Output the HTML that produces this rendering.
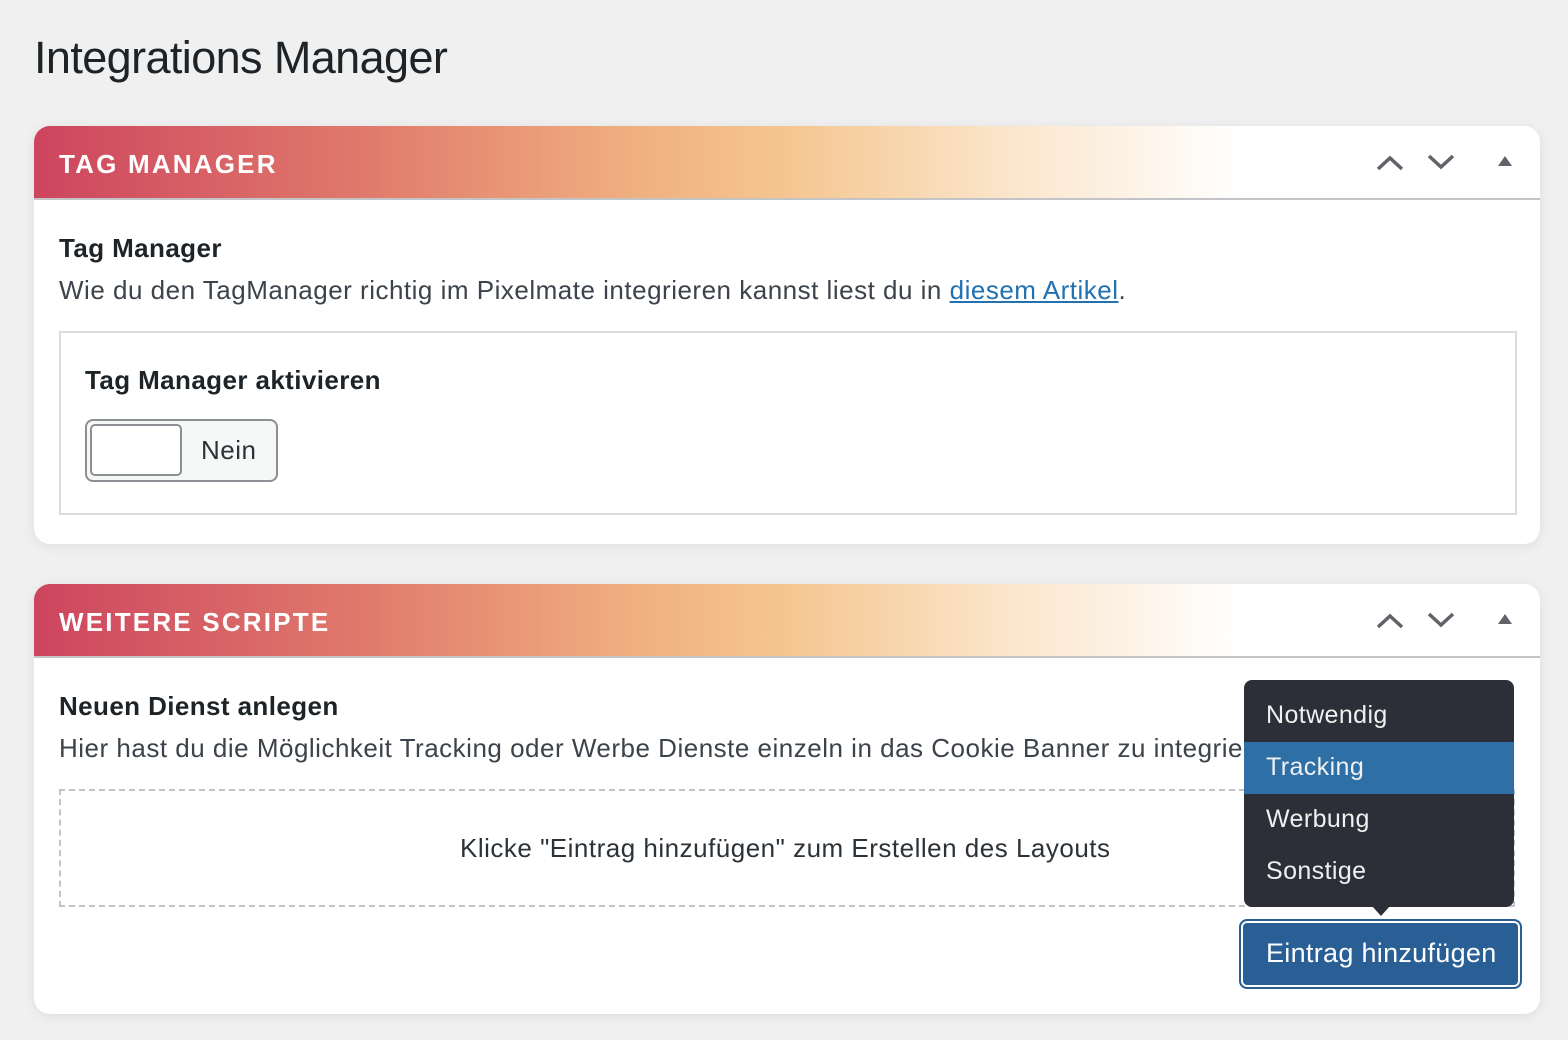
<!DOCTYPE html>
<html><head><meta charset="utf-8"><style>
body{margin:0;width:1568px;height:1040px;background:#f0f0f1;font-family:"Liberation Sans",sans-serif;color:#3c434a;position:relative;overflow:hidden}
.abs{position:absolute}
h1{position:absolute;left:34px;top:32px;margin:0;font-size:45px;font-weight:400;color:#1d2327;letter-spacing:-0.6px}
.card{position:absolute;left:34px;width:1506px;background:#fff;border-radius:16px;box-shadow:0 2px 12px rgba(0,0,0,.08);overflow:hidden}
.hd{height:72px;border-bottom:2px solid #c3c4c7;background:linear-gradient(90deg,#cd455e 0%,#e07a6c 22%,#f0b080 40%,#f5c690 50%,#fbe6cc 65%,#fff 80%)}
.hd span{position:absolute;left:25px;top:23px;color:#fff;font-weight:700;font-size:26px;letter-spacing:2.2px}
.ic{position:absolute;top:24px}
.t{font-size:26px;letter-spacing:0.5px;position:absolute;left:25px;white-space:nowrap}
.b{font-weight:700;color:#1d2327;letter-spacing:0.4px}
</style></head><body>
<h1>Integrations Manager</h1>

<div class="card" style="top:126px;height:418px">
 <div class="hd"><span>TAG MANAGER</span></div>
 <svg class="ic" style="left:1340px" width="190" height="30" viewBox="0 0 190 30"><path d="M4 19 L16 8 L28 19" stroke="#606468" stroke-width="3.5" fill="none"/><path d="M55 6 L67 17 L79 6" stroke="#606468" stroke-width="3.5" fill="none"/><path d="M124 16 L131 6 L138 16Z" fill="#606468"/></svg>
 <div class="t b" style="top:107px">Tag Manager</div>
 <div class="t" style="top:149px">Wie du den TagManager richtig im Pixelmate integrieren kannst liest du in <span style="color:#2271b1;text-decoration:underline">diesem Artikel</span>.</div>
 <div class="abs" style="left:25px;top:205px;width:1454px;height:180px;border:2px solid #dcdcde"></div>
 <div class="t b" style="left:51px;top:239px">Tag Manager aktivieren</div>
 <div class="abs" style="left:51px;top:293px;width:189px;height:59px;border:2px solid #8c8f94;border-radius:8px;background:#f6f7f7"></div>
 <div class="abs" style="left:56px;top:298px;width:88px;height:48px;border:2px solid #8c8f94;border-radius:5px;background:#fff"></div>
 <div class="t" style="left:167px;top:309px;color:#2c3338">Nein</div>
</div>

<div class="card" style="top:584px;height:430px">
 <div class="hd"><span>WEITERE SCRIPTE</span></div>
 <svg class="ic" style="left:1340px" width="190" height="30" viewBox="0 0 190 30"><path d="M4 19 L16 8 L28 19" stroke="#606468" stroke-width="3.5" fill="none"/><path d="M55 6 L67 17 L79 6" stroke="#606468" stroke-width="3.5" fill="none"/><path d="M124 16 L131 6 L138 16Z" fill="#606468"/></svg>
 <div class="t b" style="top:107px">Neuen Dienst anlegen</div>
 <div class="t" style="top:149px;width:1185px;overflow:hidden">Hier hast du die Möglichkeit Tracking oder Werbe Dienste einzeln in das Cookie Banner zu integrieren.</div>
 <div class="abs" style="left:25px;top:205px;width:1452px;height:114px;border:2px dashed #c3c4c7"></div>
 <div class="t" style="left:426px;top:249px;color:#2c3338">Klicke "Eintrag hinzufügen" zum Erstellen des Layouts</div>
</div>

<div class="abs" style="left:1244px;top:680px;width:270px;height:227px;background:#2c2f38;border-radius:8px;overflow:hidden;color:#f0f0f1;font-size:25px;letter-spacing:0.4px">
 <div style="height:52px;padding:21px 0 0 22px;box-sizing:border-box">Notwendig</div>
 <div style="height:52px;padding:11px 0 0 22px;box-sizing:border-box;background:#2e6fa6;margin-top:10px">Tracking</div>
 <div style="height:52px;padding:11px 0 0 22px;box-sizing:border-box">Werbung</div>
 <div style="height:52px;padding:11px 0 0 22px;box-sizing:border-box">Sonstige</div>
</div>
<div class="abs" style="left:1372px;top:906px;width:0;height:0;border-left:9px solid transparent;border-right:9px solid transparent;border-top:10px solid #2c2f38"></div>
<div class="abs" style="left:1239px;top:919px;width:283px;height:70px;box-sizing:border-box;background:#2a5f96;border-radius:8px;border:2px solid #2a5f96;box-shadow:inset 0 0 0 2px #fff"></div>
<div class="abs" style="left:1266px;top:938px;color:#fff;font-size:27px;letter-spacing:0.3px">Eintrag hinzufügen</div>
</body></html>
